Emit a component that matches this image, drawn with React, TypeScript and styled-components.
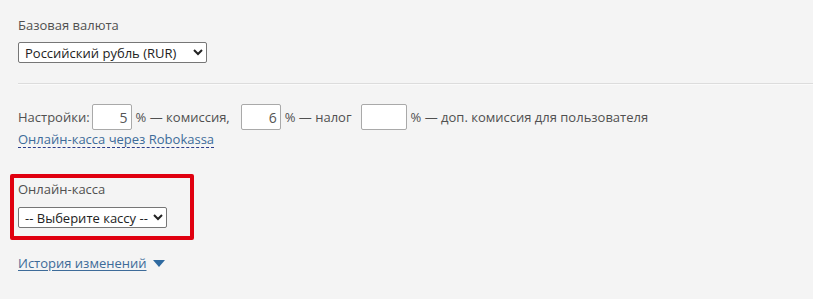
import React from "react";
import styled, { createGlobalStyle } from "styled-components";

const Global = createGlobalStyle`
  html, body { margin: 0; padding: 0; background: #f4f4f4; }
  body { font-family: "Open Sans", "Liberation Sans", sans-serif; color: #555; font-size: 13px; }
`;

const Page = styled.div`
  padding: 15px 0 20px 0;
`;

const Section = styled.div`
  padding-left: 18px;
`;

const Label = styled.div`
  font-size: 13px;
  line-height: 20px;
  color: #505050;
`;

const Select = styled.select<{ $mt: number; $w: number }>`
  font-family: "Open Sans", "Liberation Sans", sans-serif;
  font-size: 13px;
  color: #222;
  width: ${(p) => p.$w}px;
  height: 21px;
  padding: 0 2px;
  border: 1px solid #767676;
  border-radius: 2px;
  background: #fff;
  margin-top: ${(p) => p.$mt}px;
  display: block;
`;

const Divider = styled.hr`
  margin: 20px 0 0 18px;
  border: none;
  border-top: 1px solid #dcdcdc;
  border-bottom: 1px solid #fafafa;
`;

const SettingsRow = styled.div`
  display: flex;
  align-items: center;
  margin-top: 19px;
  padding-left: 18px;
  font-size: 13px;
  color: #505050;
`;

const Num = styled.input<{ $w: number }>`
  box-sizing: border-box;
  width: ${(p) => p.$w}px;
  height: 26px;
  border: 1px solid #a9a9a9;
  border-radius: 2px;
  background: #fff;
  text-align: right;
  font-family: "Open Sans", "Liberation Sans", sans-serif;
  font-size: 14px;
  color: #555;
  padding: 0 3px;
  margin: 0 4px 0 2px;
`;

const Gap = styled.span<{ $w: number }>`
  display: inline-block;
  width: ${(p) => p.$w}px;
`;

const DottedLink = styled.a`
  display: inline-block;
  margin-left: 18px;
  color: #3d6b99;
  font-size: 13px;
  line-height: 16px;
  text-decoration: none;
  border-bottom: 1px dashed #2a3d8a;
`;

const RedBox = styled.div`
  margin: 26px 0 0 10px;
  width: 168px;
  border: 4px solid #e0000f;
  padding: 1px 4px 8px 4px;
  border-radius: 2px;
`;

const HistoryLink = styled.a`
  display: inline-flex;
  align-items: center;
  margin: 14px 0 0 18px;
  color: #3d6b99;
  font-size: 13px;
  text-decoration: underline;
  text-underline-offset: 2px;
`;

const Caret = styled.span`
  display: inline-block;
  margin-left: 6px;
  width: 0;
  height: 0;
  border-left: 6px solid transparent;
  border-right: 6px solid transparent;
  border-top: 7px solid #2f6aa0;
`;

export default function App() {
  return (
    <>
      <Global />
      <Page>
        <Section>
          <Label>Базовая валюта</Label>
          <Select $mt={7} $w={189} defaultValue="rur">
            <option value="rur">Российский рубль (RUR)</option>
          </Select>
        </Section>
        <Divider />
        <SettingsRow>
          Настройки:
          <Num $w={40} defaultValue="5" />
          % — комиссия,
          <Gap $w={9} />
          <Num $w={40} defaultValue="6" />
          % — налог
          <Gap $w={7} />
          <Num $w={46} defaultValue="" />
          % — доп. комиссия для пользователя
        </SettingsRow>
        <DottedLink href="#">Онлайн-касса через Robokassa</DottedLink>
        <RedBox>
          <Label>Онлайн-касса</Label>
          <Select $mt={8} $w={149} defaultValue="">
            <option value="">-- Выберите кассу --</option>
          </Select>
        </RedBox>
        <HistoryLink href="#">
          История изменений <Caret />
        </HistoryLink>
      </Page>
    </>
  );
}
